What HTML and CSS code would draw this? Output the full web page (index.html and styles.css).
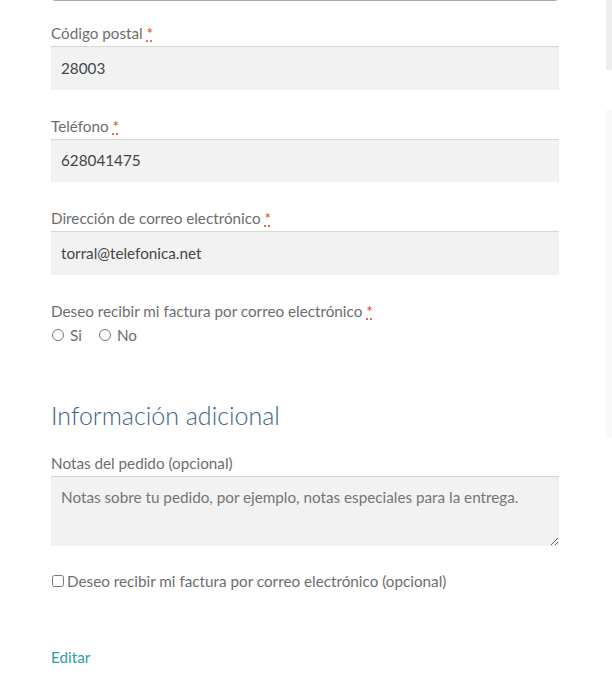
FILE: index.html
```html
<!DOCTYPE html>
<html lang="es">
<head>
<meta charset="utf-8">
<title>Checkout</title>
<link rel="stylesheet" href="styles.css">
</head>
<body>
<div class="layout">
  <main class="main">
    <div class="select-box"></div>

    <p class="form-row">
      <label class="label">Código postal <abbr class="required" title="obligatorio">*</abbr></label>
      <input class="input" type="text" value="28003">
    </p>

    <p class="form-row">
      <label class="label">Teléfono <abbr class="required" title="obligatorio">*</abbr></label>
      <input class="input" type="tel" value="628041475">
    </p>

    <p class="form-row">
      <label class="label">Dirección de correo electrónico <abbr class="required" title="obligatorio">*</abbr></label>
      <input class="input" type="email" value="torral@telefonica.net">
    </p>

    <div class="form-row radio-row">
      <span class="label">Deseo recibir mi factura por correo electrónico <abbr class="required" title="obligatorio">*</abbr></span>
      <div class="radios">
        <label class="radio"><input type="radio" name="factura"> Si</label>
        <label class="radio"><input type="radio" name="factura"> No</label>
      </div>
    </div>

    <h3 class="heading">Información adicional</h3>

    <p class="form-row notes-row">
      <label class="label">Notas del pedido (opcional)</label>
      <textarea class="textarea" placeholder="Notas sobre tu pedido, por ejemplo, notas especiales para la entrega."></textarea>
    </p>

    <p class="check-row">
      <label class="check"><input type="checkbox"> Deseo recibir mi factura por correo electrónico (opcional)</label>
    </p>

    <a class="edit-link" href="#">Editar</a>
  </main>
  <aside class="sidebar">
    <div class="side-top"></div>
    <div class="side-box"></div>
  </aside>
</div>
</body>
</html>
```

FILE: styles.css
```css
html, body {
  margin: 0;
  padding: 0;
  background: #ffffff;
}

body {
  font-family: "Lato", "Liberation Sans", sans-serif;
  font-size: 15.25px;
  color: #6d6d6d;
  overflow: hidden;
}

.layout {
  display: flex;
  align-items: flex-start;
  height: 693px;
}

.main {
  width: 508px;
  margin-left: 51px;
  flex: none;
}

.sidebar {
  margin-left: 47px;
  width: 6px;
  flex: none;
  display: flex;
  flex-direction: column;
}

.side-top {
  height: 70px;
  background: #eeeeee;
}

.side-box {
  margin-top: 40px;
  height: 328px;
  background: #f8f8f8;
}

.select-box {
  height: 40px;
  margin-top: -39px;
  margin-bottom: 20px;
  border: 1px solid #aaaaaa;
  border-radius: 4px;
  box-sizing: border-box;
}

.form-row {
  margin: 0 0 24px;
}

.label {
  display: block;
  line-height: 24px;
  margin-bottom: 1px;
  color: #6d6d6d;
}

.required {
  color: #e2401c;
  text-decoration: underline dotted #e2401c;
  text-underline-offset: 2px;
  border: 0;
  cursor: help;
}

.input,
.textarea {
  display: block;
  width: 100%;
  box-sizing: border-box;
  border: 0;
  margin: 0;
  background: #f2f2f2;
  box-shadow: inset 0 1px 1px rgba(0, 0, 0, 0.125);
  font-family: inherit;
  font-size: 15.25px;
  color: #43454b;
  outline: none;
}

.input {
  height: 43.5px;
  padding: 0 10px;
}

.textarea {
  height: 70px;
  padding: 9px 10px;
  line-height: 24px;
  resize: vertical;
}

.textarea::placeholder {
  color: #757575;
  opacity: 1;
}

.radio-row {
  margin-bottom: 0;
}

.radio-row .label {
  margin-bottom: 0;
}

.radios {
  display: flex;
  gap: 16px;
  line-height: 24px;
}

.radio {
  display: flex;
  align-items: center;
  gap: 6px;
}

.radio input {
  margin: 0 0 0 1px;
  width: 12px;
  height: 12px;
}

.heading {
  margin: 48px 0 0;
  font-size: 25px;
  font-weight: 300;
  line-height: 40px;
  color: #3c6685;
}

.notes-row {
  margin-top: 16px;
  margin-bottom: 23px;
}

.check-row {
  margin: 0;
  line-height: 24px;
}

.check {
  display: inline-flex;
  align-items: center;
  gap: 3px;
}

.check input {
  margin: 0 0 0 1px;
  width: 12px;
  height: 12px;
}

.edit-link {
  display: block;
  margin-top: 52px;
  line-height: 24px;
  color: #2e9ca6;
  text-decoration: none;
}
```
